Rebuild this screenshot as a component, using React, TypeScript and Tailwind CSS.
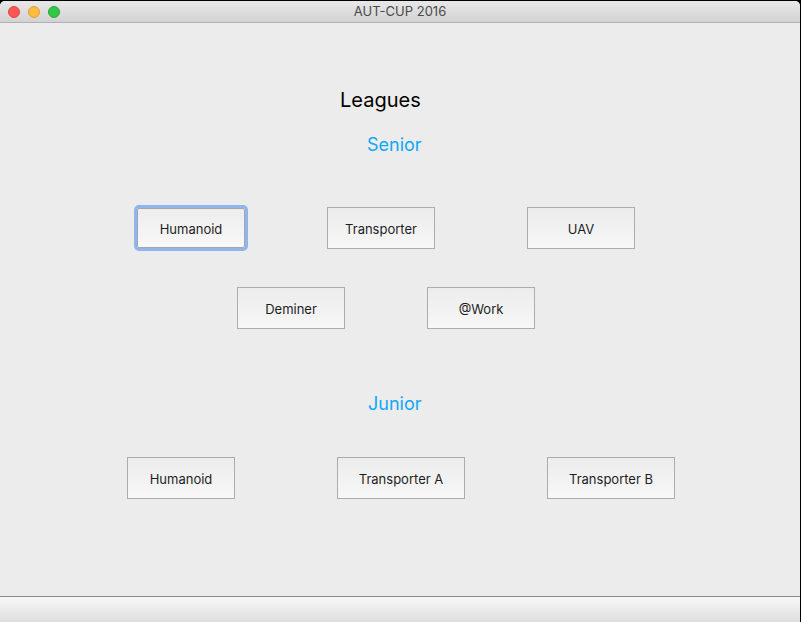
import React from 'react';

const FONT = { fontFamily: 'Inter, "Liberation Sans", sans-serif' };

type BtnProps = { label: string; w?: string; focused?: boolean };

const LeagueButton: React.FC<BtnProps> = ({ label, w = 'w-[108px]', focused }) => (
  <div className={`${w} h-[42px] shrink-0 flex`}>
    {focused ? (
      <button
        type="button"
        className="m-[1px] flex-1 pt-[3px] border border-[#a6a6a6] rounded-[2px] bg-gradient-to-b from-[#ededed] to-[#f8f8f8] text-[13px] text-[#1e1e1e] shadow-[0_0_0_3px_#8fb5ec]"
      >
        {label}
      </button>
    ) : (
      <button
        type="button"
        className="flex-1 pt-[3px] border border-[#acacac] bg-gradient-to-b from-[#ececec] to-[#f7f7f7] text-[13px] text-[#1e1e1e]"
      >
        {label}
      </button>
    )}
  </div>
);

export default function App() {
  return (
    <div className="w-[801px] h-[622px] bg-black overflow-hidden" style={FONT}>
      <div className="mt-[1px] w-[800px] h-[621px] flex flex-col rounded-t-[5px] overflow-hidden bg-[#ececec]">
        {/* title bar */}
        <div className="h-[22px] shrink-0 relative flex items-center justify-center bg-gradient-to-b from-[#e8e8e8] to-[#d3d3d3] border-b border-[#b1b1b1]">
          <div className="absolute left-[8px] top-[5px] flex gap-[8px]">
            <span className="w-[12px] h-[12px] rounded-full bg-[#fc5753] border border-[#df4744]" />
            <span className="w-[12px] h-[12px] rounded-full bg-[#fdbc40] border border-[#de9f34]" />
            <span className="w-[12px] h-[12px] rounded-full bg-[#33c748] border border-[#27aa35]" />
          </div>
          <span className="text-[13px] text-[#4a4a4a]">AUT-CUP 2016</span>
        </div>

        {/* content */}
        <div className="flex-1 flex flex-col">
          <div className="mt-[65px] pl-[340px] h-[24px] leading-[24px] text-[20px] text-black">Leagues</div>
          <div className="mt-[22px] pl-[367px] h-[22px] leading-[22px] text-[18px] text-[#0fa7f7]">Senior</div>

          <div className="mt-[51px] flex pl-[136px]">
            <LeagueButton label="Humanoid" w="w-[110px]" focused />
            <div className="w-[81px]" />
            <LeagueButton label="Transporter" />
            <div className="w-[92px]" />
            <LeagueButton label="UAV" />
          </div>

          <div className="mt-[38px] flex pl-[237px] gap-[82px]">
            <LeagueButton label="Deminer" />
            <LeagueButton label="@Work" />
          </div>

          <div className="mt-[64px] pl-[368px] h-[22px] leading-[22px] text-[18px] text-[#0fa7f7]">Junior</div>

          <div className="mt-[42px] flex pl-[127px]">
            <LeagueButton label="Humanoid" />
            <div className="w-[102px]" />
            <LeagueButton label="Transporter A" w="w-[128px]" />
            <div className="w-[82px]" />
            <LeagueButton label="Transporter B" w="w-[128px]" />
          </div>
        </div>

        {/* status bar */}
        <div className="h-[26px] shrink-0 border-t border-[#8a8a8a] bg-gradient-to-b from-[#f7f7f7] to-[#dfdfdf]" />
      </div>
    </div>
  );
}
